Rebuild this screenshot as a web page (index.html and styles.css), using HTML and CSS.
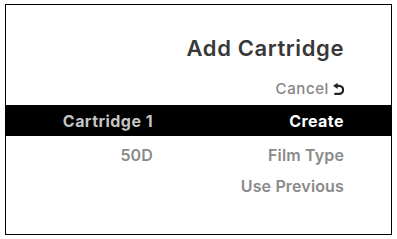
FILE: index.html
```html
<!DOCTYPE html>
<html>
<head>
<meta charset="utf-8">
<link rel="stylesheet" href="styles.css">
</head>
<body>
<div class="frame">
  <div class="title">Add Cartridge</div>
  <div class="cancel">Cancel<svg class="back" viewBox="0 0 10 11" width="11" height="12"><polygon points="0,2.6 4.2,-0.2 4.2,5.4" fill="#222"/><path d="M3 2.6 H5.6 A3.6 3.6 0 0 1 5.6 9.9 H1.2" fill="none" stroke="#222" stroke-width="2.1"/></svg></div>
  <div class="row selected"><span class="left">Cartridge 1</span><span class="right">Create</span></div>
  <div class="row first"><span class="left">50D</span><span class="right">Film Type</span></div>
  <div class="row"><span class="left"></span><span class="right">Use Previous</span></div>
</div>
</body>
</html>
```
FILE: styles.css
```css
html, body { margin: 0; padding: 0; background: #fff; }
body { width: 397px; height: 239px; overflow: hidden; font-family: Inter, "Noto Sans", sans-serif; }
.frame {
  margin: 4px 0 0 5px;
  width: 387px;
  height: 231px;
  box-sizing: border-box;
  border: 1px solid #000;
  display: flex;
  flex-direction: column;
}
.title {
  text-align: right;
  padding-right: 47px;
  margin-top: 30px;
  font-size: 22px;
  font-weight: 600;
  letter-spacing: 0.6px;
  color: #383838;
  line-height: 26px;
}
.cancel {
  display: flex;
  justify-content: flex-end;
  align-items: center;
  gap: 4px;
  padding-right: 47px;
  margin-top: 18px;
  height: 20px;
  font-size: 15px;
  font-weight: 500;
  letter-spacing: 0.6px;
  color: #858585;
  line-height: 20px;
}
.back { display: block; }
.row {
  display: grid;
  grid-template-columns: 147px 1fr;
  height: 31px;
  line-height: 31px;
  font-size: 16px;
  font-weight: 600;
  letter-spacing: 0.15px;
  color: #8a8a8a;
}
.row.selected {
  background: #000;
  margin-top: 6px;
  padding-top: 2px;
  height: 31px;
  box-sizing: border-box;
  line-height: 29px;
  font-weight: 700;
  letter-spacing: 0.45px;
}
.row.first { margin-top: 4px; }
.left { text-align: right; }
.right { text-align: right; padding-right: 47px; }
.selected .left { color: #c4c4c4; }
.selected .right { color: #fff; }
```
